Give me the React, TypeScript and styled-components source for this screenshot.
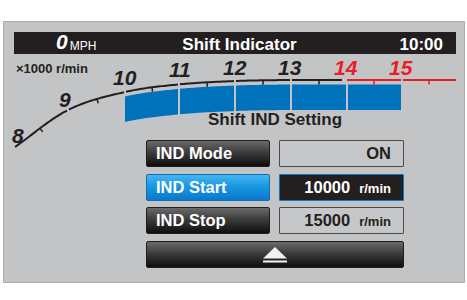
import React from 'react';
import styled, { createGlobalStyle } from 'styled-components';

const GlobalStyle = createGlobalStyle`
  html, body {
    margin: 0;
    padding: 0;
    background: #ffffff;
  }
  body {
    font-family: "Liberation Sans", Arial, sans-serif;
  }
`;

const INK = '#231f20';
const HOT = '#ed1c24';
const BLUE = '#0072bc';

const Screen = styled.div`
  box-sizing: border-box;
  width: 462px;
  height: 262px;
  margin: 21px 0 0 3px;
  padding: 10px 8px 14px 10px;
  background: #c3c4c6;
  border: 1px solid #adaeb0;
  display: flex;
  flex-direction: column;
`;

const TopBar = styled.div`
  height: 22px;
  background: ${INK};
  color: #fff;
  display: grid;
  grid-template-columns: 1fr auto 1fr;
  align-items: center;
  padding: 0 13px 0 22px;
  line-height: 22px;
`;

const Speed = styled.div`
  justify-self: start;
  margin-left: 20px;
  display: flex;
  align-items: baseline;
`;

const SpeedValue = styled.span`
  font-size: 21px;
  font-weight: bold;
  font-style: italic;
  position: relative;
  top: -1px;
`;

const SpeedUnit = styled.span`
  font-size: 12px;
  margin-left: 2px;
`;

const BarTitle = styled.div`
  font-size: 17px;
  font-weight: bold;
`;

const Clock = styled.div`
  justify-self: end;
  font-size: 17px;
  font-weight: bold;
`;

const Body = styled.div`
  flex: 1;
  display: grid;
  grid-template: 1fr / 1fr;
`;

const Scale = styled.div`
  grid-area: 1 / 1;
  justify-self: start;
  align-self: start;
  margin: 7px 0 0 2px;
  font-size: 13px;
  font-weight: bold;
  line-height: 15px;
  color: ${INK};
`;

const GaugeSvg = styled.svg`
  grid-area: 1 / 1;
  display: block;
  overflow: visible;
`;

const Num = styled.text<{ $hot?: boolean }>`
  font: italic bold 21px "Liberation Sans", Arial, sans-serif;
  fill: ${p => (p.$hot ? HOT : INK)};
`;

const Settings = styled.div`
  grid-area: 1 / 1;
  align-self: end;
  justify-self: start;
  margin-left: 132px;
  width: 258px;
  display: flex;
  flex-direction: column;
`;

const SettingsTitle = styled.div`
  font-size: 17px;
  font-weight: bold;
  line-height: 20px;
  color: ${INK};
  text-align: center;
  margin-bottom: 10px;
`;

const Rows = styled.div`
  display: grid;
  grid-template-columns: 124px 125px;
  grid-auto-rows: 27px;
  column-gap: 9px;
  row-gap: 6.7px;
`;

const Key = styled.div<{ $active?: boolean }>`
  box-sizing: border-box;
  border-radius: 2px;
  border: 1px solid ${p => (p.$active ? '#0a6fb8' : '#1e1e1e')};
  background: ${p =>
    p.$active
      ? 'linear-gradient(#45b6f2 0%, #1a97e2 45%, #0a78cc 100%)'
      : 'linear-gradient(#6a6a6a 0%, #3c3c3c 45%, #0e0e0e 100%)'};
  color: #fff;
  font-size: 16.5px;
  font-weight: bold;
  line-height: 25px;
  padding-left: 9px;
  white-space: nowrap;
`;

const Value = styled.div<{ $active?: boolean }>`
  box-sizing: border-box;
  border-radius: 1px;
  border: 1px solid ${p => (p.$active ? '#0a78c8' : '#4a4a4a')};
  background: ${p => (p.$active ? INK : '#c6c7c9')};
  color: ${p => (p.$active ? '#fff' : INK)};
  display: flex;
  align-items: baseline;
  justify-content: flex-end;
  gap: 9px;
  padding-right: 12px;
  font-size: 16.5px;
  font-weight: bold;
  line-height: 25px;
`;

const Unit = styled.span`
  font-size: 13px;
`;

const WideKey = styled.div`
  grid-column: 1 / -1;
  box-sizing: border-box;
  border-radius: 2px;
  border: 1px solid #1e1e1e;
  background: linear-gradient(#6a6a6a 0%, #3c3c3c 45%, #0e0e0e 100%);
  display: flex;
  align-items: center;
  justify-content: center;
`;

// gauge curve knots (page px); flat at y=80 past the last one
const K: [number, number][] = [
  [15, 147],
  [68, 110],
  [125, 92],
  [178, 84.5],
  [236, 81],
  [292, 80],
  [345, 80],
];

const slopes = K.map((_, i) => {
  const a = K[Math.max(0, i - 1)];
  const b = K[Math.min(K.length - 1, i + 1)];
  return (b[1] - a[1]) / (b[0] - a[0]);
});

const curveY = (x: number) => {
  if (x >= K[K.length - 1][0]) return 80;
  if (x <= K[0][0]) return K[0][1] + slopes[0] * (x - K[0][0]);
  let i = 0;
  while (x > K[i + 1][0]) i++;
  const [x0, y0] = K[i];
  const [x1, y1] = K[i + 1];
  const h = x1 - x0;
  const t = (x - x0) / h;
  const t2 = t * t;
  const t3 = t2 * t;
  return (
    (2 * t3 - 3 * t2 + 1) * y0 +
    (t3 - 2 * t2 + t) * h * slopes[i] +
    (-2 * t3 + 3 * t2) * y1 +
    (t3 - t2) * h * slopes[i + 1]
  );
};

const pts = (x0: number, x1: number, dy = 0) => {
  const out: string[] = [];
  for (let x = x0; x < x1; x += 2) out.push(`${x},${(curveY(x) + dy).toFixed(2)}`);
  out.push(`${x1},${(curveY(x1) + dy).toFixed(2)}`);
  return out;
};

const lineSegs = [
  { from: 15, to: 67 },
  { from: 69, to: 124 },
  { from: 126, to: 178 },
  { from: 180, to: 234 },
  { from: 236, to: 290 },
  { from: 292, to: 342 },
  { from: 347, to: 401, hot: true },
  { from: 403, to: 456, hot: true },
];

const ticks = [
  { x: 40 },
  { x: 97 },
  { x: 152 },
  { x: 207 },
  { x: 263 },
  { x: 319 },
  { x: 374, hot: true },
  { x: 429, hot: true },
];

const bars = [
  [125, 178],
  [180, 234],
  [236, 290],
  [292, 346],
  [348, 401],
];

const labels = [
  { t: '8', x: 12, y: 143 },
  { t: '9', x: 59, y: 107 },
  { t: '10', x: 113, y: 85 },
  { t: '11', x: 169, y: 77 },
  { t: '12', x: 223, y: 74.5 },
  { t: '13', x: 278, y: 74.5 },
  { t: '14', x: 334, y: 74.5, hot: true },
  { t: '15', x: 389, y: 74.5, hot: true },
];

const Gauge: React.FC = () => (
  <GaugeSvg width={442} height={214} viewBox="14 54 442 214">
    {bars.map(([a, b]) => {
      const top = pts(a, b, 4.5);
      const bottom = pts(a, b, 30).reverse();
      return <polygon key={a} points={[...top, ...bottom].join(' ')} fill={BLUE} />;
    })}
    {lineSegs.map(s => (
      <polyline
        key={s.from}
        points={pts(s.from, s.to).join(' ')}
        fill="none"
        stroke={s.hot ? HOT : INK}
        strokeWidth={2}
      />
    ))}
    {ticks.map(k => {
      const y = curveY(k.x);
      const s = (curveY(k.x + 1) - curveY(k.x - 1)) / 2;
      const n = Math.hypot(1, s);
      const nx = -s / n;
      const ny = 1 / n;
      return (
        <line
          key={k.x}
          x1={k.x}
          y1={y}
          x2={k.x + nx * 4.5}
          y2={y + ny * 4.5}
          stroke={k.hot ? HOT : INK}
          strokeWidth={1.5}
        />
      );
    })}
    {labels.map(l => (
      <Num key={l.t} x={l.x} y={l.y} $hot={l.hot}>
        {l.t}
      </Num>
    ))}
  </GaugeSvg>
);

const EjectIcon: React.FC = () => (
  <svg width={26} height={18} viewBox="0 0 26 18">
    <polygon points="13,1 25,12.5 1,12.5" fill="#f2f2f2" />
    <rect x={1} y={14.5} width={24} height={2} fill="#f2f2f2" />
  </svg>
);

const App: React.FC = () => (
  <>
    <GlobalStyle />
    <Screen>
      <TopBar>
        <Speed>
          <SpeedValue>0</SpeedValue>
          <SpeedUnit>MPH</SpeedUnit>
        </Speed>
        <BarTitle>Shift Indicator</BarTitle>
        <Clock>10:00</Clock>
      </TopBar>
      <Body>
        <Gauge />
        <Scale>×1000 r/min</Scale>
        <Settings>
          <SettingsTitle>Shift IND Setting</SettingsTitle>
          <Rows>
            <Key>IND Mode</Key>
            <Value>ON</Value>
            <Key $active>IND Start</Key>
            <Value $active>
              10000 <Unit>r/min</Unit>
            </Value>
            <Key>IND Stop</Key>
            <Value>
              15000 <Unit>r/min</Unit>
            </Value>
            <WideKey>
              <EjectIcon />
            </WideKey>
          </Rows>
        </Settings>
      </Body>
    </Screen>
  </>
);

export default App;
